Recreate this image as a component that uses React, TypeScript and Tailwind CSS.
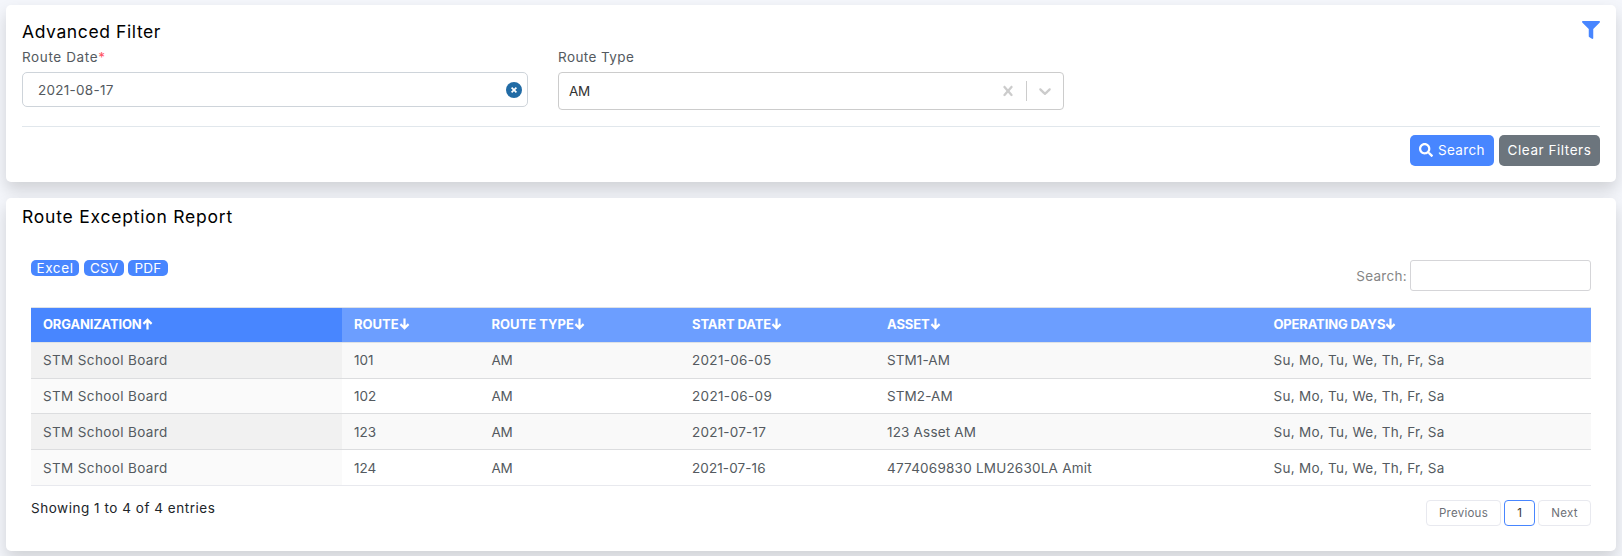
import { FaFilter, FaSearch } from 'react-icons/fa';

const card = 'rounded-[5px] bg-white shadow-[0_8px_16px_rgba(0,0,0,0.15)]';

function SortArrow({ up = false }: { up?: boolean }) {
  return (
    <svg
      className="h-[12px] w-[11px] shrink-0"
      viewBox="0 0 11 12"
      fill="none"
      stroke="white"
      strokeWidth="2.2"
    >
      {up ? <path d="M5.5 11.5V1.8M1.4 5.9l4.1-4.1 4.1 4.1" /> : <path d="M5.5 .5v9.7M1.4 6.1l4.1 4.1 4.1-4.1" />}
    </svg>
  );
}

const columns = [
  { label: 'ORGANIZATION', width: 'w-[311px]', spacing: 'tracking-[-0.17px]', up: true },
  { label: 'ROUTE', width: 'w-[137.5px]', spacing: 'tracking-[0px]' },
  { label: 'ROUTE TYPE', width: 'w-[200.5px]', spacing: 'tracking-[0px]' },
  { label: 'START DATE', width: 'w-[195px]', spacing: 'tracking-[-0.1px]' },
  { label: 'ASSET', width: 'w-[386.5px]', spacing: 'tracking-[-0.1px]' },
  { label: 'OPERATING DAYS', width: 'w-[329.5px]', spacing: 'tracking-[-0.16px]' },
];

const rows = [
  { route: '101', date: '2021-06-05', dateSpacing: 'tracking-[0.3px]', asset: 'STM1-AM', assetSpacing: 'tracking-[0.1px]', height: 'h-[36px]' },
  { route: '102', date: '2021-06-09', dateSpacing: 'tracking-[0.35px]', asset: 'STM2-AM', assetSpacing: 'tracking-[0.1px]', height: 'h-[35px]' },
  { route: '123', date: '2021-07-17', dateSpacing: 'tracking-[0.22px]', asset: '123 Asset AM', assetSpacing: 'tracking-[0.18px]', height: 'h-[36px]' },
  { route: '124', date: '2021-07-16', dateSpacing: 'tracking-[0.1px]', asset: '4774069830 LMU2630LA Amit', assetSpacing: 'tracking-[0.22px]', height: 'h-[36px]' },
];

const exportsList = [
  { label: 'Excel', style: 'w-12 mr-[5px] tracking-[0.6px]' },
  { label: 'CSV', style: 'w-10 mr-1 tracking-[0.1px]' },
  { label: 'PDF', style: 'w-10 tracking-[0.2px]' },
];

function FilterCard() {
  return (
    <section className={`${card} h-[177px] px-4 pt-[15px]`}>
      <div className="flex h-6 items-center justify-between">
        <h2 className="text-[17.5px] font-normal tracking-[0.6px] text-black">Advanced Filter</h2>
        <FaFilter className="-mt-[5px] size-[18px] text-[#4886ff]" />
      </div>
      <div className="flex gap-[30px]">
        <div className="w-[506px]">
          <label className="flex h-7 items-center pb-[2px] tracking-[0.62px]">
            Route Date<span className="text-[#ff5364]">*</span>
          </label>
          <div className="flex h-[35px] items-center justify-between rounded-[5px] border border-[#ced4da] pr-[5px] pl-[15px]">
            <span className="tracking-[0.27px]">2021-08-17</span>
            <svg className="size-4" viewBox="0 0 16 16">
              <circle cx="8" cy="8" r="8" fill="#216ba5" />
              <path d="M5.6 5.6l4.8 4.8M10.4 5.6l-4.8 4.8" stroke="white" strokeWidth="1.7" />
            </svg>
          </div>
        </div>
        <div className="w-[506px]">
          <label className="flex h-7 items-center pb-[2px] tracking-[0.42px]">Route Type</label>
          <div className="flex h-[38px] items-center rounded-[4px] border border-[#ccc] pl-[10px] text-[#333]">
            <span className="flex-1 tracking-[-0.4px]">AM</span>
            <svg className="mr-2 size-5 fill-[#ccc]" viewBox="0 0 20 20">
              <path d="M14.348 14.849c-0.469 0.469-1.229 0.469-1.697 0l-2.651-3.030-2.651 3.029c-0.469 0.469-1.229 0.469-1.697 0-0.469-0.469-0.469-1.229 0-1.697l2.758-3.15-2.759-3.152c-0.469-0.469-0.469-1.228 0-1.697s1.228-0.469 1.697 0l2.652 3.031 2.651-3.031c0.469-0.469 1.228-0.469 1.697 0s0.469 1.229 0 1.697l-2.758 3.152 2.758 3.15c0.469 0.469 0.469 1.229 0 1.698z" />
            </svg>
            <span className="h-5 w-px bg-[#ccc]" />
            <svg className="mx-2 size-5 fill-[#ccc]" viewBox="0 0 20 20">
              <path d="M4.516 7.548c0.436-0.446 1.043-0.481 1.576 0l3.908 3.747 3.908-3.747c0.533-0.481 1.141-0.446 1.574 0 0.436 0.445 0.408 1.197 0 1.615-0.406 0.418-4.695 4.502-4.695 4.502-0.217 0.223-0.502 0.335-0.787 0.335s-0.57-0.112-0.789-0.335c0 0-4.287-4.084-4.695-4.502s-0.436-1.17 0-1.615z" />
            </svg>
          </div>
        </div>
      </div>
      <div className="mt-4 flex justify-end gap-[5px] border-t border-[#e1e7ec] pt-2 text-white">
        <button className="flex h-[31px] w-[84px] items-center rounded-[5px] bg-[#4886ff] pb-px pl-[9px] tracking-[0.35px]">
          <FaSearch className="mr-[5px] size-[14px]" />
          Search
        </button>
        <button className="h-[31px] w-[101px] rounded-[5px] bg-[#6c757d] pb-px tracking-[0.55px] whitespace-nowrap">
          Clear Filters
        </button>
      </div>
    </section>
  );
}

function ReportTable() {
  return (
    <table className="w-[1560px] table-fixed border-separate border-spacing-0 text-left">
      <thead>
        <tr className="h-9 bg-[#6c9eff] text-[13px] text-white">
          {columns.map((c) => (
            <th
              key={c.label}
              className={`${c.width} ${c.spacing} ${c.up ? 'bg-[#4886ff]' : ''} border-y border-[#dee2e6] pt-0 pb-[2px] pl-3 font-bold`}
            >
              <span className="flex items-center">
                {c.label}
                <SortArrow up={c.up} />
              </span>
            </th>
          ))}
        </tr>
      </thead>
      <tbody>
        {rows.map((r, i) => {
          const last = i === rows.length - 1;
          const cell = `border-b ${last ? 'border-[#e8e9ee]' : 'border-[#dcdddf]'} pt-0 ${i === 0 ? 'pb-[2px]' : 'pb-0'} pl-3`;
          const odd = i % 2 === 0;
          return (
            <tr key={r.route} className={`${r.height} ${odd ? 'bg-[#f9f9f9]' : 'bg-white'}`}>
              <td className={`${cell} ${odd ? 'bg-[#f1f1f1]' : 'bg-[#fafafa]'} tracking-[0.36px]`}>STM School Board</td>
              <td className={`${cell} tracking-[0px]`}>{r.route}</td>
              <td className={`${cell} tracking-[-0.4px]`}>AM</td>
              <td className={`${cell} ${r.dateSpacing}`}>{r.date}</td>
              <td className={`${cell} ${r.assetSpacing}`}>{r.asset}</td>
              <td className={`${cell} tracking-[0.27px]`}>Su, Mo, Tu, We, Th, Fr, Sa</td>
            </tr>
          );
        })}
      </tbody>
    </table>
  );
}

function ReportCard() {
  return (
    <section className={`${card} mt-4 h-[353px] px-4 pt-[7px]`}>
      <h2 className="flex h-6 items-center text-[17.5px] font-normal tracking-[0.78px] text-black">
        Route Exception Report
      </h2>
      <div className="mt-[31px] px-[9px]">
        <div className="flex h-[47px] items-start justify-between">
          <div className="flex text-white">
            {exportsList.map((e) => (
              <button key={e.label} className={`${e.style} flex h-4 items-center justify-center rounded-[5px] bg-[#4886ff]`}>
                {e.label}
              </button>
            ))}
          </div>
          <label className="flex items-center text-[#868686]">
            <span className="mr-[3px] tracking-[0.3px]">Search:</span>
            <input className="h-[31px] w-[181px] rounded-[3px] border border-[#d5d5d8] bg-white outline-none" />
          </label>
        </div>
        <ReportTable />
        <div className="flex justify-between">
          <p className="mt-[12px] tracking-[0.53px] text-[#212529]">Showing 1 to 4 of 4 entries</p>
          <div className="mt-[14px] flex gap-[3px] text-[11.5px] text-[#6c6f76]">
            <button className="h-[26px] w-[75px] rounded-[4px] border border-[#e8e9ef] tracking-[0.25px]">Previous</button>
            <button className="h-[26px] w-[31px] rounded-[4px] border border-[#4886ff] text-[#333]">1</button>
            <button className="h-[26px] w-[53px] rounded-[4px] border border-[#e8e9ef] tracking-[0.3px]">Next</button>
          </div>
        </div>
      </div>
    </section>
  );
}

export default function App() {
  return (
    <main className="h-[556px] overflow-hidden bg-[#f4f6fb] px-[6px] pt-[5px] font-[Inter,sans-serif] text-[13.5px] leading-[20px] text-[#545a60]">
      <FilterCard />
      <ReportCard />
    </main>
  );
}
